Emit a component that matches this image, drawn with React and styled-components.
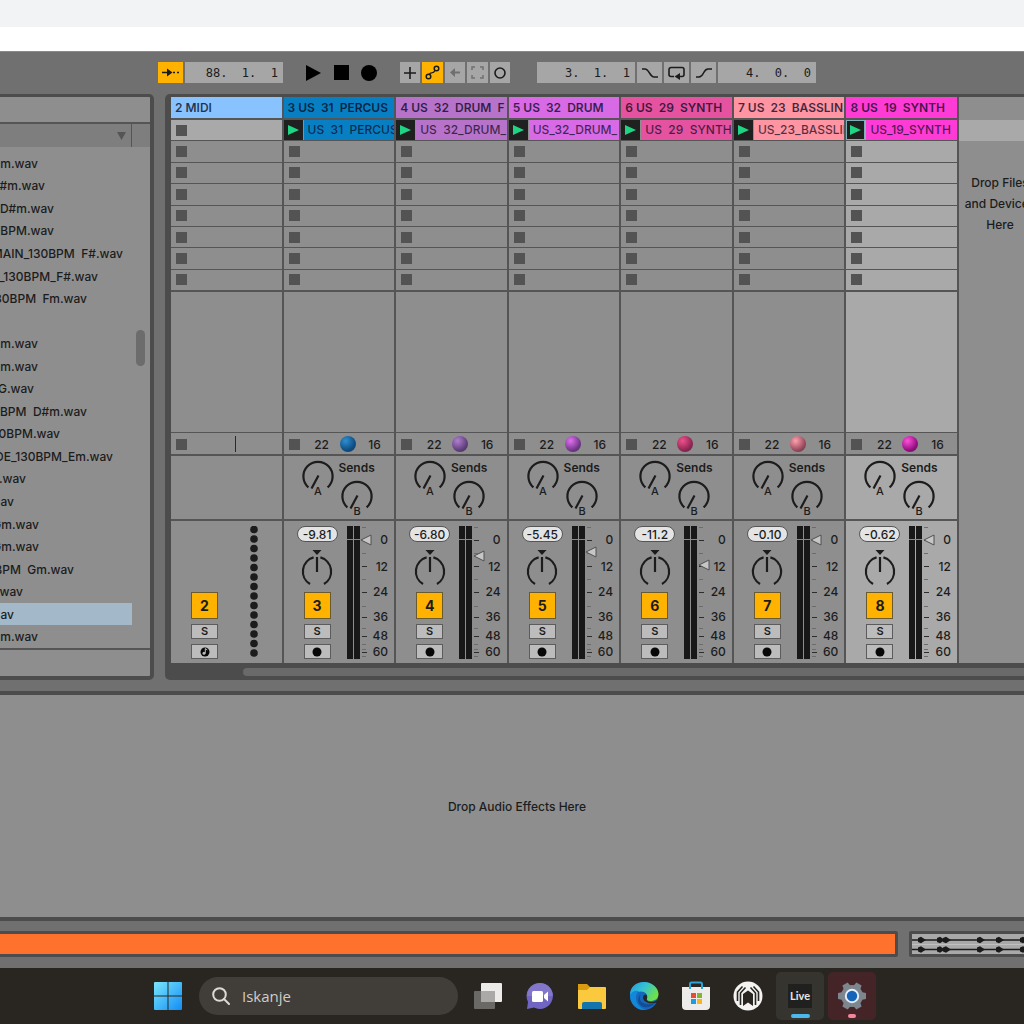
import styled, { createGlobalStyle, ThemeProvider } from "styled-components";

const theme = {
  colors: {
    app: "#707070",
    frame: "#4c4c4c",
    line: "#555555",
    panel: "#8e8e8e",
    light: "#a9a9a9",
    control: "#a6a6a6",
    accent: "#ffb200",
    ink: "#1c1c1c",
    taskbar: "#292622",
  },
};

const GlobalStyle = createGlobalStyle`
  * {
    box-sizing: border-box;
  }
  body {
    margin: 0;
    background: ${theme.colors.taskbar};
    color: ${theme.colors.ink};
    font-family: Inter, "Liberation Sans", sans-serif;
    font-size: 12px;
    font-weight: 500;
    overflow-x: hidden;
  }
  button, input {
    margin: 0;
    padding: 0;
    border: 0;
    color: inherit;
    font: inherit;
  }
  svg {
    display: block;
    flex: none;
  }
`;

const Backdrop = styled.div`
  height: 51px;
  background: #ffffff;
  border-top: 27px solid #f2f3f5;
`;

const Workspace = styled.main`
  background: ${({ theme }) => theme.colors.app};
`;

/* transport bar */

const Transport = styled.header`
  display: flex;
  height: 43px;
  padding: 10px 0 0 158px;
  border-top: 1px solid #8a8a8a;
`;

const ControlGroup = styled.div`
  display: flex;
  gap: 2px;
  height: 21px;
  margin-right: ${({ $after }) => $after || 0}px;
`;

const ToolButton = styled.button`
  display: flex;
  align-items: center;
  justify-content: center;
  width: ${({ $small }) => ($small ? 20 : 25)}px;
  flex: ${({ $small }) => ($small ? "1 1 0" : "none")};
  height: 21px;
  background: ${({ $on, theme }) => ($on ? theme.colors.accent : theme.colors.control)};
`;

const ModeGroup = styled(ControlGroup)`
  width: 110px;
`;

const PlainButton = styled.button`
  display: flex;
  align-items: center;
  justify-content: center;
  width: 28px;
  height: 21px;
  background: none;
`;

const TransportButtons = styled.div`
  display: flex;
  margin: 0 17px 0 16px;
`;

const PositionField = styled.input`
  width: 98px;
  height: 21px;
  padding-right: 5px;
  background: ${({ theme }) => theme.colors.control};
  font-family: "DejaVu Sans Mono", "Liberation Mono", monospace;
  font-size: 12px;
  text-align: right;
`;

/* browser */

const Panels = styled.div`
  display: flex;
  align-items: stretch;
  gap: 11px;
`;

const Browser = styled.aside`
  display: flex;
  flex-direction: column;
  flex: none;
  width: 154px;
  border: 3px solid ${({ theme }) => theme.colors.frame};
  border-width: 3px 4px 4px 0;
  border-radius: 0 5px 5px 0;
  background: ${({ theme }) => theme.colors.panel};
  overflow: hidden;
`;

const BrowserSearch = styled.input`
  height: 27px;
  background: ${({ theme }) => theme.colors.panel};
  border-bottom: 2px solid ${({ theme }) => theme.colors.line};
`;

const BrowserHead = styled.div`
  display: flex;
  height: 23px;
  background: #7e7e7e;
`;

const SortButton = styled.button`
  display: flex;
  align-items: center;
  justify-content: flex-end;
  width: 132px;
  padding-right: 5px;
  background: none;
  border-right: 1px solid ${({ theme }) => theme.colors.line};
`;

const BrowserBody = styled.div`
  display: flex;
  flex: 1;
`;

const FileList = styled.ul`
  display: flex;
  flex-direction: column;
  width: 132px;
  margin: 0;
  padding: 5px 0 0;
  list-style: none;
`;

const FileRow = styled.li`
  display: flex;
  align-items: center;
  flex: 1;
  background: ${({ $selected }) => ($selected ? "#a3b8c8" : "none")};
`;

const FileName = styled.span`
  display: flex;
  justify-content: flex-end;
  width: ${({ $end }) => $end}px;
  white-space: pre;
`;

const BrowserScroll = styled.div`
  width: 18px;
  padding: 183px 5px 0 4px;
`;

const BrowserThumb = styled.div`
  height: 36px;
  border-radius: 5px;
  background: #6c6c6c;
`;

const BrowserFoot = styled.div`
  height: 28px;
  border-top: 2px solid ${({ theme }) => theme.colors.line};
`;

/* session */

const Session = styled.section`
  flex: 1;
  min-width: 0;
  padding: 3px 0 0 6px;
  background: ${({ theme }) => theme.colors.frame};
  border-radius: 5px 0 0 5px;
  overflow: hidden;
`;

const Tracks = styled.div`
  display: flex;
`;

const TrackColumn = styled.article`
  flex: 1 1 0;
  min-width: 0;
  background: ${({ $active, theme }) => ($active ? theme.colors.light : theme.colors.panel)};
  border-right: 2px solid ${({ theme }) => theme.colors.line};
`;

const TrackTitle = styled.h2`
  height: 23px;
  margin: 0;
  padding-left: 4px;
  border-bottom: 2px solid ${({ theme }) => theme.colors.line};
  background: ${({ $color }) => $color};
  color: rgba(10, 10, 30, 0.78);
  font-size: 12px;
  font-weight: 600;
  line-height: 21px;
  white-space: pre;
  overflow: hidden;
`;

const Slots = styled.div`
  display: grid;
  grid-template-columns: minmax(0, 1fr);
  grid-template-rows: repeat(8, 1fr);
  height: 172px;
  border-bottom: 1px solid ${({ theme }) => theme.colors.line};
`;

const Slot = styled.div`
  display: flex;
  align-items: center;
  min-height: 0;
  padding-left: ${({ $filled }) => ($filled ? 0 : 5)}px;
  border-bottom: 1px solid ${({ theme }) => theme.colors.line};
  background: ${({ $light, theme }) => ($light ? theme.colors.light : "none")};
`;

const StopButton = styled.button`
  width: 11px;
  height: 11px;
  background: #535353;
`;

const LaunchButton = styled.button`
  display: flex;
  align-items: center;
  justify-content: center;
  flex: none;
  width: 19px;
  height: 100%;
  background: #202020;
  outline: ${({ $active }) => ($active ? "1px solid #7fb0b8" : "none")};
  outline-offset: -1px;
`;

const ClipName = styled.span`
  flex: 1;
  min-width: 0;
  height: 100%;
  margin-left: 1px;
  padding-left: 4px;
  background: ${({ $color }) => $color};
  color: rgba(10, 10, 30, 0.72);
  line-height: 20px;
  white-space: pre;
  overflow: hidden;
`;

const Empty = styled.div`
  height: 140px;
`;

const Status = styled.div`
  display: flex;
  align-items: center;
  height: 24px;
  padding: 1px 0 0 5px;
  border: solid ${({ theme }) => theme.colors.line};
  border-width: 1px 0 2px;
  background: ${({ theme }) => theme.colors.panel};
`;

const StatusValue = styled.span`
  width: 16px;
  margin-left: ${({ $gap }) => $gap}px;
  text-align: center;
`;

const Phase = styled.span`
  width: 16px;
  height: 16px;
  margin-left: 10px;
  border-radius: 50%;
  background: radial-gradient(circle at 35% 30%, ${({ $hot }) => $hot}, ${({ $deep }) => $deep} 65%, #3c3c44);
`;

const InsertMark = styled.span`
  width: 1px;
  height: 16px;
  margin-left: 48px;
  background: #2a2a2a;
`;

const Sends = styled.div`
  display: flex;
  gap: 7px;
  height: 65px;
  padding: 4px 0 0 18px;
  border-bottom: 2px solid ${({ theme }) => theme.colors.line};
`;

const SendColumn = styled.div`
  display: flex;
  flex-direction: column;
  align-items: center;
  gap: 4px;
  width: 32px;
`;

const SendTitle = styled.span`
  font-weight: 600;
  line-height: 16px;
`;

const KnobBox = styled.label`
  position: relative;
  display: block;
  height: 36px;
`;

const KnobInput = styled.input`
  position: absolute;
  inset: 0;
  width: 100%;
  height: 100%;
  opacity: 0;
`;

const Mixer = styled.div`
  display: flex;
  height: 142px;
  padding: 5px 0 4px 13px;
`;

const MixerControls = styled.div`
  display: flex;
  flex-direction: column;
  align-items: center;
  gap: 5px;
  width: 41px;
  margin-right: 9px;
`;

const VolumeField = styled.input`
  width: 41px;
  height: 16px;
  margin-bottom: 2px;
  border: 1px solid #555555;
  border-radius: 8px;
  background: #e4e4e4;
  text-align: center;
`;

const Activator = styled.button`
  width: 27px;
  height: 27px;
  margin-top: auto;
  border: 1px solid #6a5a30;
  background: ${({ theme }) => theme.colors.accent};
  font-size: 14px;
  font-weight: 700;
`;

const SmallToggle = styled.button`
  display: flex;
  align-items: center;
  justify-content: center;
  width: 27px;
  height: 15px;
  border: 1px solid #5c5c5c;
  background: #bcbcbc;
  font-size: 11px;
  font-weight: 600;
  line-height: 13px;
`;

const MidiMeter = styled.div`
  display: flex;
  justify-content: center;
  width: 40px;
`;

const FaderBox = styled.div`
  position: relative;
  width: 13px;
  height: 133px;
`;

const Fader = styled.input`
  position: absolute;
  inset: 0;
  width: 13px;
  height: 133px;
  appearance: none;
  background: none;
  writing-mode: vertical-lr;
  direction: rtl;

  &::-webkit-slider-thumb {
    appearance: none;
    width: 12px;
    height: 12px;
    background: url("data:image/svg+xml,%3Csvg xmlns='http://www.w3.org/2000/svg' width='12' height='12'%3E%3Cpath d='M1 6 11 1v10z' fill='%23c6c6c6' stroke='%23505050'/%3E%3C/svg%3E");
  }
`;

const Scale = styled.div`
  display: grid;
  grid-template-rows: 28px 26px 24px 26px 12px 20px;
  align-items: center;
  width: 14px;
  height: 133px;
  text-align: right;
  justify-items: end;
  line-height: 12px;
`;

const DropColumn = styled.div`
  flex: none;
  width: 65px;
  background: ${({ theme }) => theme.colors.panel};
  overflow: hidden;
`;

const DropSlot = styled.div`
  height: 21px;
  margin-top: 23px;
  background: ${({ theme }) => theme.colors.light};
`;

const DropText = styled.p`
  width: 82px;
  margin: 31px 0 0;
  line-height: 21px;
  text-align: center;
`;

const SessionScroll = styled.div`
  height: 17px;
  padding: 5px 0 4px 72px;
`;

const SessionThumb = styled.div`
  height: 8px;
  border-radius: 4px 0 0 4px;
  background: #6a6a6a;
`;

/* device area and overview */

const Devices = styled.section`
  display: flex;
  align-items: center;
  justify-content: center;
  height: 230px;
  margin-top: 11px;
  padding-left: 10px;
  border: solid ${({ theme }) => theme.colors.frame};
  border-width: 4px 0;
  background: ${({ theme }) => theme.colors.panel};
`;

const Overview = styled.div`
  display: flex;
  gap: 11px;
  padding: 10px 0 11px;
`;

const ArrangementStrip = styled.div`
  flex: 1;
  height: 26px;
  border: 3px solid ${({ theme }) => theme.colors.frame};
  border-left: 0;
  border-radius: 0 3px 3px 0;
  background: #ff722e;
`;

const ClipStrip = styled.div`
  width: 115px;
  height: 26px;
  border: 3px solid ${({ theme }) => theme.colors.frame};
  border-right: 0;
  border-radius: 3px 0 0 3px;
  background: ${({ theme }) => theme.colors.light};
  overflow: hidden;
`;

/* taskbar */

const Taskbar = styled.nav`
  display: flex;
  align-items: center;
  height: 56px;
  padding-left: 154px;
  background: ${({ theme }) => theme.colors.taskbar};
`;

const StartButton = styled.button`
  width: 28px;
  height: 28px;
  background: none;
`;

const SearchBox = styled.label`
  display: flex;
  align-items: center;
  gap: 12px;
  width: 259px;
  height: 38px;
  margin: 0 4px 0 17px;
  padding-left: 13px;
  border-radius: 19px;
  background: #413e39;
`;

const SearchInput = styled.input`
  width: 180px;
  background: none;
  font-family: "Open Sans", sans-serif;
  font-size: 15px;
  font-weight: 400;

  &::placeholder {
    color: #cfccc8;
    opacity: 1;
  }
`;

const TaskButton = styled.button`
  position: relative;
  display: flex;
  align-items: center;
  justify-content: center;
  width: 48px;
  height: 48px;
  margin: 0 2px;
  border-radius: 5px;
  background: ${({ $tile }) => $tile || "none"};

  &::after {
    content: "";
    position: absolute;
    bottom: 2px;
    width: ${({ $mark }) => $mark || 0}px;
    height: 4px;
    border-radius: 2px;
    background: ${({ $markColor }) => $markColor || "none"};
  }
`;

const LiveBadge = styled.span`
  width: 24px;
  height: 24px;
  background: #20211f;
  color: #e6e6e6;
  font-family: Lato, sans-serif;
  font-size: 11px;
  font-weight: 700;
  line-height: 24px;
`;

const files = [
  { name: "m.wav", end: 38 },
  { name: "D#m.wav", end: 45 },
  { name: "_ D#m.wav", end: 54 },
  { name: "0BPM.wav", end: 54 },
  { name: "MAIN_130BPM  F#.wav", end: 123 },
  { name: "_130BPM_F#.wav", end: 98 },
  { name: "30BPM  Fm.wav", end: 87 },
  { name: "", end: 0 },
  { name: "m.wav", end: 38 },
  { name: "m.wav", end: 38 },
  { name: "G.wav", end: 34 },
  { name: "0BPM  D#m.wav", end: 87 },
  { name: "0BPM.wav", end: 60 },
  { name: "DE_130BPM_Em.wav", end: 113 },
  { name: ".wav", end: 26 },
  { name: "av", end: 14 },
  { name: "Gm.wav", end: 39 },
  { name: "Gm.wav", end: 39 },
  { name: "BPM  Gm.wav", end: 74 },
  { name: "wav", end: 23 },
  { name: "av", end: 14, selected: true },
  { name: "m.wav", end: 38 },
];

const tracks = [
  { id: 2, title: "MIDI", color: "#88c3ff" },
  { id: 3, title: "US  31  PERCUS", clip: "US  31  PERCUS", color: "#087fc2", hot: "#2f8fd0", deep: "#0c4a80", volume: "-9.81", fader: 113 },
  { id: 4, title: "US  32  DRUM  F", clip: "US  32_DRUM_", color: "#b773ca", hot: "#b27fd0", deep: "#5d3c78", volume: "-6.80", fader: 97 },
  { id: 5, title: "US  32  DRUM", clip: "US_32_DRUM_", color: "#d86be5", hot: "#e070f0", deep: "#6d3485", volume: "-5.45", fader: 101 },
  { id: 6, title: "US  29  SYNTH", clip: "US  29  SYNTH", color: "#e552a0", hot: "#f0508c", deep: "#8a2450", volume: "-11.2", fader: 88 },
  { id: 7, title: "US  23  BASSLIN", clip: "US_23_BASSLIN", color: "#ff94a3", hot: "#ffa0ae", deep: "#94465a", volume: "-0.10", fader: 113 },
  { id: 8, title: "US  19  SYNTH", clip: "US_19_SYNTH", color: "#ff3bd5", hot: "#ff50dc", deep: "#8e0c7c", volume: "-0.62", fader: 113, active: true },
];

const ticks = [1, 14, 27, 40, 53, 66, 80, 91, 102, 110, 118, 123, 126, 130];
const majorTicks = [14, 40, 66, 91, 110, 126];

function Knob({ label }) {
  return (
    <KnobBox>
      <svg width="32" height="36" viewBox="0 0 32 36">
        <path d="M6.4 27.4A14.6 14.6 0 1 1 25.6 27.4" fill="none" stroke="#1c1c1c" strokeWidth="2.2" />
        <path d="M16.5 15.5 9.5 28.5" stroke="#1c1c1c" strokeWidth="2.2" />
        <text x="16" y="35" textAnchor="middle" fontSize="11" fontWeight="500" fill="#1c1c1c">
          {label}
        </text>
      </svg>
      <KnobInput type="range" aria-label={"Send " + label} defaultValue="0" />
    </KnobBox>
  );
}

function PanKnob() {
  return (
    <KnobBox>
      <svg width="32" height="36" viewBox="0 0 32 36">
        <path d="M11.5 1h9L16 6z" fill="#1c1c1c" />
        <path d="M12.6 8.4A14.6 14.6 0 0 0 9 35M19.4 8.4A14.6 14.6 0 0 1 23 35" fill="none" stroke="#1c1c1c" strokeWidth="2.2" />
        <path d="M16 8v15" stroke="#1c1c1c" strokeWidth="2.2" />
      </svg>
      <KnobInput type="range" aria-label="Pan" defaultValue="50" />
    </KnobBox>
  );
}

function Meter() {
  return (
    <svg width="13" height="133" viewBox="0 0 13 133">
      <path d="M0 0h6v133H0zM7 0h6v133H7z" fill="#181818" />
      <path d="M0 13.5h13" stroke="#8a8a8a" />
    </svg>
  );
}

function TrackMixer({ track }) {
  return (
    <Mixer>
      <MixerControls>
        {track.volume && (
          <>
            <VolumeField aria-label="Volume" defaultValue={track.volume} />
            <PanKnob />
          </>
        )}
        <Activator aria-pressed="true">{track.id}</Activator>
        <SmallToggle aria-label="Solo">S</SmallToggle>
        <SmallToggle aria-label="Arm">
          <svg width="12" height="12" viewBox="0 0 12 12">
            <circle cx="6" cy="6" r="4.5" fill="#080808" />
            {!track.volume && <path d="M6.3 2.5v4.4M6.3 2.5l2 1.5" stroke="#bcbcbc" fill="none" />}
            {!track.volume && <circle cx="5" cy="7.2" r="1.5" fill="#bcbcbc" />}
          </svg>
        </SmallToggle>
      </MixerControls>
      {track.volume ? (
        <>
          <Meter />
          <FaderBox>
            <svg width="13" height="133" viewBox="0 0 13 133">
              {ticks.map((y) => (
                <path
                  key={y}
                  d={`M2 ${y + 0.5}h${majorTicks.includes(y) ? 5 : 4}`}
                  stroke={majorTicks.includes(y) ? "#2c2c2c" : "#6c6c6c"}
                />
              ))}
            </svg>
            <Fader type="range" aria-label="Track volume" min="0" max="121" defaultValue={track.fader} />
          </FaderBox>
          <Scale>
            {[0, 12, 24, 36, 48, 60].map((n) => (
              <span key={n}>{n}</span>
            ))}
          </Scale>
        </>
      ) : (
        <MidiMeter>
          <svg width="8" height="133" viewBox="0 0 8 133">
            {Array.from({ length: 14 }, (_, i) => (
              <circle key={i} cx="4" cy={3.5 + i * 9.5} r="3.8" fill="#1c1c1c" />
            ))}
          </svg>
        </MidiMeter>
      )}
    </Mixer>
  );
}

function Track({ track }) {
  return (
    <TrackColumn $active={track.active}>
      <TrackTitle $color={track.color}>{track.id + " " + track.title}</TrackTitle>
      <Slots>
        {track.clip ? (
          <Slot $filled>
            <LaunchButton $active={track.active} aria-label={"Launch " + track.clip}>
              <svg width="11" height="12" viewBox="0 0 11 12">
                <path d="M0 1 11 6 0 11z" fill="#1fd482" />
              </svg>
            </LaunchButton>
            <ClipName $color={track.color}>{track.clip}</ClipName>
          </Slot>
        ) : (
          <Slot $light>
            <StopButton aria-label="Stop" />
          </Slot>
        )}
        {[2, 3, 4, 5, 6, 7, 8].map((n) => (
          <Slot key={n}>
            <StopButton aria-label="Stop" />
          </Slot>
        ))}
      </Slots>
      <Empty />
      <Status>
        <StopButton aria-label="Stop track" />
        {track.clip ? (
          <>
            <StatusValue $gap={14}>22</StatusValue>
            <Phase $hot={track.hot} $deep={track.deep} />
            <StatusValue $gap={11}>16</StatusValue>
          </>
        ) : (
          <InsertMark />
        )}
      </Status>
      <Sends>
        {track.clip && (
          <>
            <Knob label="A" />
            <SendColumn>
              <SendTitle>Sends</SendTitle>
              <Knob label="B" />
            </SendColumn>
          </>
        )}
      </Sends>
      <TrackMixer track={track} />
    </TrackColumn>
  );
}

function TransportBar() {
  return (
    <Transport>
      <ControlGroup>
        <ToolButton $on aria-label="Follow">
          <svg width="19" height="11" viewBox="0 0 19 11">
            <path d="M1 5.5h7M12 5.5h2M16 5.5h2" stroke="#1c1c1c" strokeWidth="1.6" />
            <path d="M6 1.5 11.5 5.5 6 9.5z" fill="#1c1c1c" />
          </svg>
        </ToolButton>
        <PositionField aria-label="Arrangement position" defaultValue="88.  1.  1" />
      </ControlGroup>
      <TransportButtons>
        <PlainButton aria-label="Play">
          <svg width="16" height="18" viewBox="0 0 16 18">
            <path d="M1 1 16 9 1 17z" />
          </svg>
        </PlainButton>
        <PlainButton aria-label="Stop">
          <svg width="15" height="15" viewBox="0 0 15 15">
            <path d="M0 0h15v15H0z" />
          </svg>
        </PlainButton>
        <PlainButton aria-label="Record">
          <svg width="16" height="16" viewBox="0 0 16 16">
            <circle cx="8" cy="8" r="8" />
          </svg>
        </PlainButton>
      </TransportButtons>
      <ModeGroup $after={27}>
        <ToolButton $small aria-label="Overdub">
          <svg width="12" height="12" viewBox="0 0 12 12">
            <path d="M6 0v12M0 6h12" stroke="#1c1c1c" strokeWidth="1.6" />
          </svg>
        </ToolButton>
        <ToolButton $small $on aria-label="Automation arm">
          <svg width="15" height="15" viewBox="0 0 15 15" fill="none" stroke="#1c1c1c" strokeWidth="1.5">
            <circle cx="3.5" cy="11.5" r="2.3" />
            <circle cx="11.5" cy="3.5" r="2.3" />
            <path d="M4.5 9.3C5.500 6.500 8 9.500 10 5.500" />
          </svg>
        </ToolButton>
        <ToolButton $small aria-label="Re-enable automation">
          <svg width="12" height="11" viewBox="0 0 12 11">
            <path d="M4 5.500h7" stroke="#707070" strokeWidth="2" />
            <path d="M6 1v9L1 5.500z" fill="#707070" />
          </svg>
        </ToolButton>
        <ToolButton $small aria-label="Capture">
          <svg width="13" height="13" viewBox="0 0 13 13" fill="none" stroke="#707070" strokeWidth="1.5">
            <path d="M1 4V1h3M9 1h3v3M12 9v3H9M4 12H1V9" />
          </svg>
        </ToolButton>
        <ToolButton $small aria-label="Session record">
          <svg width="12" height="12" viewBox="0 0 12 12">
            <circle cx="6" cy="6" r="5" fill="none" stroke="#1c1c1c" strokeWidth="1.6" />
          </svg>
        </ToolButton>
      </ModeGroup>
      <ControlGroup>
        <PositionField aria-label="Loop start" defaultValue="3.  1.  1" />
        <ToolButton aria-label="Punch in">
          <svg width="16" height="10" viewBox="0 0 16 10" fill="none" stroke="#1c1c1c" strokeWidth="1.5">
            <path d="M0 1h3C7 1 8 9 12 9h4" />
          </svg>
        </ToolButton>
        <ToolButton aria-label="Loop">
          <svg width="17" height="15" viewBox="0 0 17 15">
            <path d="M6 11.5H3a2 2 0 0 1-2-2v-5a2 2 0 0 1 2-2h11a2 2 0 0 1 2 2v5a2 2 0 0 1-2 2h-2" fill="none" stroke="#1c1c1c" strokeWidth="1.6" />
            <path d="M12 8v7L6.500 11.500z" fill="#1c1c1c" />
          </svg>
        </ToolButton>
        <ToolButton aria-label="Punch out">
          <svg width="16" height="10" viewBox="0 0 16 10" fill="none" stroke="#1c1c1c" strokeWidth="1.5">
            <path d="M0 9h3C8 9 7 1 12 1h4" />
          </svg>
        </ToolButton>
        <PositionField aria-label="Loop length" defaultValue="4.  0.  0" />
      </ControlGroup>
    </Transport>
  );
}

function FileBrowser() {
  return (
    <Browser>
      <BrowserSearch aria-label="Search files" />
      <BrowserHead>
        <SortButton aria-label="Sort by name">
          <svg width="9" height="9" viewBox="0 0 9 9">
            <path d="M0 1h9L4.500 9z" fill="#555555" />
          </svg>
        </SortButton>
      </BrowserHead>
      <BrowserBody>
        <FileList>
          {files.map((file, i) => (
            <FileRow key={i} $selected={file.selected}>
              <FileName $end={file.end}>{file.name}</FileName>
            </FileRow>
          ))}
        </FileList>
        <BrowserScroll>
          <BrowserThumb />
        </BrowserScroll>
      </BrowserBody>
      <BrowserFoot />
    </Browser>
  );
}

function Waveform() {
  const hits = [9, 28, 34, 68, 87, 111];
  return (
    <svg width="112" height="20" viewBox="0 0 112 20">
      <path d="M0 10.500h112" stroke="#c0c0c0" />
      {[6, 15.5].map((y) => (
        <g key={y} fill="#1a1a1a">
          <path d={`M0 ${y}h112`} stroke="#1a1a1a" strokeWidth="1.3" />
          {hits.map((x) => (
            <path key={x} d={`M${x - 3} ${y - 2}l3-1.300 5 3.300-5 3.300-3-1.300z`} />
          ))}
        </g>
      ))}
    </svg>
  );
}

function WindowsTaskbar() {
  return (
    <Taskbar>
      <StartButton aria-label="Start">
        <svg width="28" height="28" viewBox="0 0 28 28">
          <defs>
            <linearGradient id="win" x1="0" y1="0" x2="1" y2="1" gradientUnits="objectBoundingBox">
              <stop offset="0" stopColor="#7ae6fb" />
              <stop offset="1" stopColor="#128df5" />
            </linearGradient>
          </defs>
          <path d="M1 0h12.500v13.500H0V1a1 1 0 0 1 1-1zM14.500 0H27a1 1 0 0 1 1 1v12.500H14.500zM0 14.500h13.500V28H1a1 1 0 0 1-1-1zM14.500 14.500H28V27a1 1 0 0 1-1 1H14.500z" fill="url(#win)" />
        </svg>
      </StartButton>
      <SearchBox>
        <svg width="18" height="18" viewBox="0 0 18 18" fill="none" stroke="#dddad6" strokeWidth="2">
          <circle cx="7.500" cy="7.500" r="6.300" />
          <path d="m12 12 5 5" strokeLinecap="round" />
        </svg>
        <SearchInput placeholder="Iskanje" aria-label="Iskanje" />
      </SearchBox>
      <TaskButton aria-label="Task view">
        <svg width="30" height="28" viewBox="0 0 30 28">
          <rect x="8" y="1" width="21" height="19" rx="1" fill="#ecebea" />
          <rect x="1" y="9" width="21" height="18" rx="1" fill="#6b6966" />
          <path d="M8 9h14v11H8z" fill="#aaa9a7" />
        </svg>
      </TaskButton>
      <TaskButton aria-label="Chat">
        <svg width="28" height="28" viewBox="0 0 28 28">
          <path d="M14 1a13 13 0 1 1-6 24.600L1 27l1-7A13 13 0 0 1 14 1z" fill="#7165c4" />
          <path d="M14 1a13 13 0 0 1 13 13H1A13 13 0 0 1 14 1z" fill="#8d83cf" opacity=".6" />
          <rect x="6" y="9" width="11" height="11" rx="1.500" fill="#fff" />
          <path d="m18 13 4-3.500v10L18 16z" fill="#fff" />
        </svg>
      </TaskButton>
      <TaskButton aria-label="File Explorer">
        <svg width="30" height="28" viewBox="0 0 30 28">
          <path d="M1 2h9l3 3v6H1z" fill="#d99b12" />
          <path d="M1 8h9l3-3h15a1 1 0 0 1 1 1v20a1 1 0 0 1-1 1H2a1 1 0 0 1-1-1z" fill="#fbc93d" />
          <path d="M5 27v-5a2 2 0 0 1 2-2h16a2 2 0 0 1 2 2v5z" fill="#1475ad" />
        </svg>
      </TaskButton>
      <TaskButton aria-label="Edge">
        <svg width="30" height="30" viewBox="0 0 30 30">
          <defs>
            <linearGradient id="edge" x1="0" y1="0" x2="1" y2="0.500">
              <stop offset="0" stopColor="#2499df" />
              <stop offset="0.500" stopColor="#35c1d3" />
              <stop offset="1" stopColor="#6de04a" />
            </linearGradient>
          </defs>
          <circle cx="15" cy="15" r="14" fill="#1668bd" />
          <path d="M1 14C1 6 7 1 15 1s14.500 6 14.500 12c0 5-4 7-8 7-3 0-4-1-3.500-2.500 1-3-.5-7-6-7-6 0-10 3-11 3.500z" fill="url(#edge)" />
          <path d="M1 14c1-3 5-5 9-4-6 5-3 16 7 19C8 30 1 23 1 14z" fill="#1189d8" />
          <path d="M12 13c-4 6 2 13 14 9-3 3-6 5-11 4-6-1-8-9-3-13z" fill="#114e94" />
          <path d="M18 17.500C17 20 20 21.500 23 21c2 0 5-2 6-3l-1 3.500c-6 2-14 0-14-5 0-2 1-3 3-3 1 1 1.500 2 1 4z" fill="#292622" />
        </svg>
      </TaskButton>
      <TaskButton aria-label="Microsoft Store">
        <svg width="28" height="30" viewBox="0 0 28 30">
          <path d="M8 8V3a1.500 1.500 0 0 1 1.500-1.500h9A1.500 1.500 0 0 1 20 3v5" fill="none" stroke="#2aa5d8" strokeWidth="2" />
          <path d="M0 6h28v19a4 4 0 0 1-4 4H4a4 4 0 0 1-4-4z" fill="#eeecea" />
          <path d="M8 4v4M20 4v4" stroke="#2aa5d8" strokeWidth="2" />
          <path d="M9 12h5v5H9z" fill="#e94b35" />
          <path d="M15 12h5v5h-5z" fill="#7fb928" />
          <path d="M9 18h5v5H9z" fill="#199fe0" />
          <path d="M15 18h5v5h-5z" fill="#f9b61c" />
        </svg>
      </TaskButton>
      <TaskButton aria-label="Headphones">
        <svg width="30" height="30" viewBox="0 0 30 30">
          <circle cx="15" cy="15" r="14.500" fill="#f4f3f1" />
          <path d="M10 25V13l5-3.500 5 3.500v12l-5-3.500z" fill="#292622" />
          <path d="M7.500 24V12l5-5.500M22.500 24V12l-5-5.500M4.500 20v-9l5-5.500M25.500 20v-9l-5-5.500" fill="none" stroke="#292622" strokeWidth="1.600" />
        </svg>
      </TaskButton>
      <TaskButton $tile="#35342f" $mark={19} $markColor="#4db8ea">
        <LiveBadge>Live</LiveBadge>
      </TaskButton>
      <TaskButton $tile="#452427" $mark={8} $markColor="#f0879a" aria-label="Settings">
        <svg width="30" height="30" viewBox="0 0 30 30">
          <g fill="#7d868e">
            <circle cx="15" cy="15" r="11" />
            {[30, 90, 150, 210, 270, 330].map((a) => (
              <path key={a} d="M11 6 12 1h6l1 5z" transform={`rotate(${a} 15 15)`} />
            ))}
          </g>
          <circle cx="15" cy="15" r="6.200" fill="#1763b8" stroke="#e3edf6" strokeWidth="2" />
        </svg>
      </TaskButton>
    </Taskbar>
  );
}

export default function App() {
  return (
    <ThemeProvider theme={theme}>
      <GlobalStyle />
      <Backdrop />
      <Workspace>
        <TransportBar />
        <Panels>
          <FileBrowser />
          <Session>
            <Tracks>
              {tracks.map((track) => (
                <Track key={track.id} track={track} />
              ))}
              <DropColumn>
                <DropSlot />
                <DropText>
                  Drop Files
                  <br />
                  and Devices
                  <br />
                  Here
                </DropText>
              </DropColumn>
            </Tracks>
            <SessionScroll>
              <SessionThumb />
            </SessionScroll>
          </Session>
        </Panels>
        <Devices>Drop Audio Effects Here</Devices>
        <Overview>
          <ArrangementStrip />
          <ClipStrip>
            <Waveform />
          </ClipStrip>
        </Overview>
      </Workspace>
      <WindowsTaskbar />
    </ThemeProvider>
  );
}
